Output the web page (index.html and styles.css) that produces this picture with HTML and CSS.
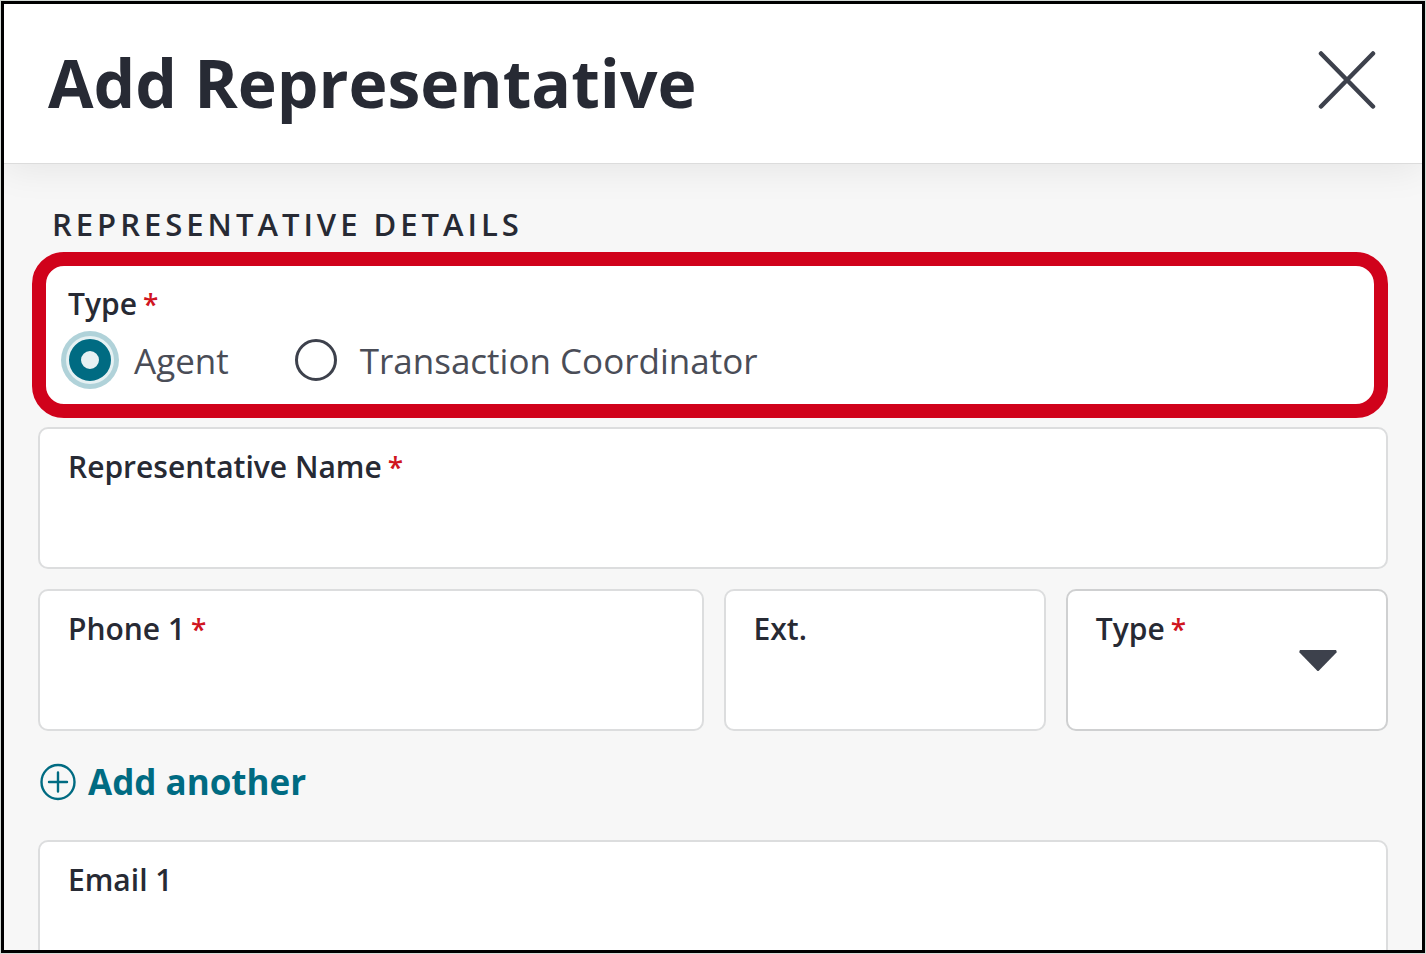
FILE: index.html
```html
<!DOCTYPE html>
<html lang="en">

<head>
    <meta charset="UTF-8">
    <meta name="viewport" content="width=device-width, initial-scale=1.0">
    <title>Add Representative</title>
    <link rel="stylesheet" href="styles.css">
</head>

<body>
    <div class="modal">
        <header class="modal-header">
            <h1>Add Representative</h1>
            <button type="button" class="close" aria-label="Close">
                <svg width="58" height="60" viewBox="0 0 58 60" fill="none" stroke="#3d414c" stroke-width="4.500" stroke-linecap="round">
                    <path d="M3 3.500L55 56.500M55 3.500L3 56.500" />
                </svg>
            </button>
        </header>

        <form class="modal-body">
            <h2>Representative Details</h2>

            <fieldset class="type-group">
                <legend class="label">Type<span class="required">*</span></legend>
                <div class="options">
                    <label class="option"><input type="radio" name="repType" value="agent" checked>Agent</label>
                    <label class="option"><input type="radio" name="repType" value="coordinator">Transaction Coordinator</label>
                </div>
            </fieldset>

            <div class="field">
                <label class="label" for="repName">Representative Name<span class="required">*</span></label>
                <input type="text" id="repName" required>
            </div>

            <div class="phone-row">
                <div class="field">
                    <label class="label" for="phone1">Phone 1<span class="required">*</span></label>
                    <input type="tel" id="phone1" required>
                </div>
                <div class="field">
                    <label class="label" for="ext1">Ext.</label>
                    <input type="text" id="ext1">
                </div>
                <div class="field field-select">
                    <label class="label" for="phoneType1">Type<span class="required">*</span></label>
                    <select id="phoneType1" required>
                        <option value=""></option>
                    </select>
                    <svg class="arrow" width="38" height="22" viewBox="0 0 38 22">
                        <path d="M1 0H37Q38 1 37.500 2.500L20 20.500Q19 21.500 18 20.500L.5 2.500Q0 1 1 0Z" fill="#3d414c" />
                    </svg>
                </div>
            </div>

            <button type="button" class="add-another">
                <svg width="36" height="38" viewBox="0 0 36 38" fill="none" stroke="#006b82" stroke-width="2.400" stroke-linecap="round">
                    <ellipse cx="18" cy="19" rx="16.500" ry="17" />
                    <path d="M18 9.500V28.500M9 19H27" />
                </svg>
                Add another
            </button>

            <div class="field">
                <label class="label" for="email1">Email 1</label>
                <input type="email" id="email1">
            </div>
        </form>
    </div>
</body>

</html>
```

FILE: styles.css
```css
* {
    box-sizing: border-box;
}

body {
    margin: 0;
    padding: 1px;
    height: 100vh;
    background-color: #d5dbd7;
    color: #272a34;
    font-family: "Open Sans", "Noto Sans", sans-serif;
}

.modal {
    display: flex;
    flex-direction: column;
    height: 100%;
    border: 3px solid #000;
    background-color: #f7f7f7;
    overflow: hidden;
}

.modal-header {
    display: flex;
    flex-shrink: 0;
    justify-content: space-between;
    align-items: center;
    height: 160px;
    padding: 0 46px 8px 44px;
    background-color: #fff;
    border-bottom: 1px solid #dcdcdc;
    box-shadow: 0 4px 36px rgba(0, 0, 0, 0.08);
}

h1 {
    margin: 0;
    padding-top: 4px;
    font-size: 66px;
    line-height: 88px;
    font-weight: 700;
}

button {
    padding: 0;
    border: none;
    background: none;
    font-family: inherit;
    cursor: pointer;
}

.close svg,
.add-another svg {
    display: block;
}

.modal-body {
    padding: 40px 34px 0;
}

h2 {
    margin: 0 0 8px 14px;
    font-size: 31px;
    line-height: 40px;
    font-weight: 600;
    letter-spacing: 4px;
    text-transform: uppercase;
}

.label {
    display: block;
    padding: 0;
    font-size: 30px;
    line-height: 32px;
    font-weight: 600;
}

.required {
    margin-left: 6px;
    font-size: 28px;
    color: #d0151f;
}

.type-group {
    margin: 0 0 9px -6px;
    padding: 22px 22px 16px;
    border: 14px solid #d0021b;
    border-radius: 32px;
    background-color: #fff;
}

.type-group legend {
    float: left;
    width: 100%;
}

.options {
    display: flex;
    clear: both;
    gap: 66px;
    padding: 12px 0 0 1px;
}

.option {
    display: flex;
    align-items: center;
    gap: 23px;
    height: 56px;
    font-size: 35px;
    color: #4a4d57;
}

.option input {
    appearance: none;
    width: 42px;
    height: 42px;
    margin: 0;
    border: 3px solid #3d414c;
    border-radius: 50%;
    background-color: #fff;
}

.option input:checked {
    border: 12px solid #006b82;
    background-color: #e6f1f3;
    box-shadow: 0 0 0 3px #e6f1f3, 0 0 0 8px #b0d2d9;
}

.field {
    position: relative;
    height: 142px;
    padding: 22px 28px;
    border: 2px solid #dcddde;
    border-radius: 10px;
    background-color: #fff;
}

.field input,
.field select {
    width: 100%;
    height: 60px;
    padding: 0;
    border: none;
    outline: none;
    background: none;
    color: inherit;
    font-family: inherit;
    font-size: 35px;
}

.field-select {
    border-color: #cfd0d1;
}

.field-select select {
    appearance: none;
}

/* sits over the select */
.arrow {
    position: absolute;
    top: 59px;
    right: 49px;
    pointer-events: none;
}

.phone-row {
    display: grid;
    grid-template-columns: 665fr 322fr 322fr;
    gap: 20px;
    margin-top: 20px;
}

.add-another {
    display: flex;
    align-items: center;
    gap: 12px;
    margin: 29px 0 36px 2px;
    color: #006b82;
    font-size: 35px;
    line-height: 44px;
    font-weight: 700;
}
```
